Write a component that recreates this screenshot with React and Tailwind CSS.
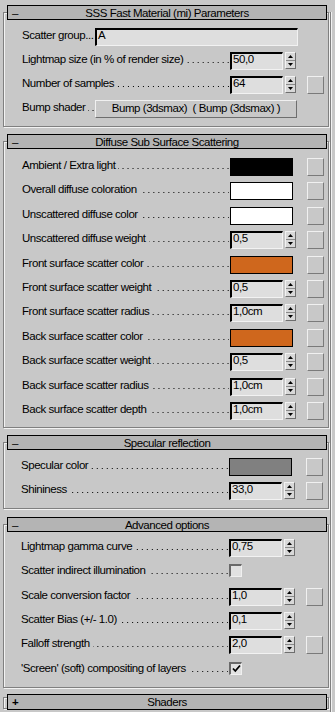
import React from "react";

const FONT = "font-['Liberation_Sans',Arial,sans-serif]";

function Leader() {
  return (
    <div className="flex-1 ml-[3px] mr-[1px] mt-[10px] h-px bg-[linear-gradient(90deg,transparent_4px,#000_4px)] bg-[length:5px_1px] bg-repeat-x bg-right" />
  );
}

function Label({ text, w = "w-[208px]" }) {
  return (
    <div className={`${w} shrink-0 flex h-[18px]`}>
      <span className="whitespace-nowrap leading-[14px]">{text}</span>
      <Leader />
    </div>
  );
}

function Field({ value, w = "w-[53px]" }) {
  return (
    <div className={`${w} h-[18px] bg-[#dedede] border-t-2 border-l-2 border-r border-b border-t-black border-l-black border-r-[#f2f2f2] border-b-[#f2f2f2] pl-px leading-[11px] whitespace-nowrap`}>
      {value}
    </div>
  );
}

function Spinner({ value }) {
  return (
    <div className="flex h-[18px]">
      <Field value={value} />
      <div className="ml-[2px] w-[11px] h-[17px] flex flex-col border border-t-[#f2f2f2] border-l-[#f2f2f2] border-r-[#6e6e6e] border-b-[#6e6e6e] bg-[#d8d8d8]">
        <div className="flex-1 flex items-center justify-center border-b border-b-[#8a8a8a]">
          <svg width="5" height="3" viewBox="0 0 5 3"><polygon points="0,3 5,3 2.5,0" fill="#000" /></svg>
        </div>
        <div className="flex-1 flex items-center justify-center">
          <svg width="5" height="3" viewBox="0 0 5 3"><polygon points="0,0 5,0 2.5,3" fill="#000" /></svg>
        </div>
      </div>
    </div>
  );
}

function Swatch({ color }) {
  return <div className={`w-[63px] h-[18px] border border-black ${color}`} />;
}

function SqBtn() {
  return (
    <div className="w-[17px] h-[18px] border border-t-[#f0f0f0] border-l-[#f0f0f0] border-r-[#7a7a7a] border-b-[#7a7a7a] bg-[#c8c8c8]" />
  );
}

function Check({ checked }) {
  return (
    <div className="mt-px w-[13px] h-[13px] bg-[#e2e2e2] border-t-2 border-l-2 border-r border-b border-t-[#6a6a6a] border-l-[#6a6a6a] border-r-[#f0f0f0] border-b-[#f0f0f0] flex items-center justify-center">
      {checked && (
        <svg width="9" height="9" viewBox="0 0 9 9">
          <path d="M1 4.5 L3.3 7 L8 1.5" stroke="#000" strokeWidth="1.8" fill="none" />
        </svg>
      )}
    </div>
  );
}

function Row({ label, control, btn }) {
  return (
    <div className="flex h-[18px]">
      <Label text={label} />
      <div className="w-[77px] shrink-0 flex">{control}</div>
      {btn && <SqBtn />}
    </div>
  );
}

function Header({ title }) {
  return (
    <div className="flex h-[15px] border border-black bg-[#b4b4b4] leading-[14px]">
      <span className="w-[18px] pl-[4px]">–</span>
      <span className="flex-1 text-center whitespace-nowrap">{title}</span>
      <span className="w-[18px]" />
    </div>
  );
}

function Rollout({ title, mt, pt, pb, pl, gap, children }) {
  return (
    <div className={`ml-[3px] mr-px border border-[#808080] shadow-[inset_1px_1px_0_#f2f2f2,1px_1px_0_#f2f2f2] ${mt}`}>
      <div className="-mt-[8px] ml-[3px] mr-px">
        <Header title={title} />
      </div>
      <div className={`flex flex-col ${pt} ${pb} ${pl} ${gap}`}>{children}</div>
    </div>
  );
}

export default function App() {
  return (
    <div className={`w-[335px] h-[712px] overflow-hidden bg-[#c8c8c8] text-black text-[11.5px] tracking-[-0.45px] ${FONT} flex`}>
      <div className="w-[330px] shrink-0 flex flex-col">
        <Rollout title="SSS Fast Material (mi) Parameters" mt="mt-[12px]" pt="pt-[8px]" pb="pb-[8px]" pl="pl-[18px]" gap="gap-[6px]">
          <div className="flex h-[18px]">
            <span className="w-[73px] shrink-0 overflow-hidden whitespace-nowrap leading-[14px]">Scatter group...</span>
            <Field value="A" w="w-[203px]" />
          </div>
          <Row label="Lightmap size (in % of render size)" control={<Spinner value="50,0" />} />
          <Row label="Number of samples" control={<Spinner value="64" />} btn />
          <div className="flex h-[18px]">
            <Label text="Bump shader" w="w-[73px]" />
            <div className="w-[202px] h-[18px] border border-t-[#f0f0f0] border-l-[#f0f0f0] border-r-[#6e6e6e] border-b-[#6e6e6e] bg-[#c8c8c8] text-center leading-[15px] whitespace-nowrap">
              Bump (3dsmax)&nbsp; ( Bump (3dsmax) )
            </div>
          </div>
        </Rollout>

        <Rollout title="Diffuse Sub Surface Scattering" mt="mt-[14px]" pt="pt-[9px]" pb="pb-[7px]" pl="pl-[18px]" gap="gap-[6.4px]">
          <Row label="Ambient / Extra light" control={<Swatch color="bg-black" />} btn />
          <Row label="Overall diffuse coloration" control={<Swatch color="bg-white" />} btn />
          <Row label="Unscattered diffuse color" control={<Swatch color="bg-white" />} btn />
          <Row label="Unscattered diffuse weight" control={<Spinner value="0,5" />} btn />
          <Row label="Front surface scatter color" control={<Swatch color="bg-[#cf671d]" />} btn />
          <Row label="Front surface scatter weight" control={<Spinner value="0,5" />} btn />
          <Row label="Front surface scatter radius" control={<Spinner value="1,0cm" />} btn />
          <Row label="Back surface scatter color" control={<Swatch color="bg-[#cf671d]" />} btn />
          <Row label="Back surface scatter weight" control={<Spinner value="0,5" />} btn />
          <Row label="Back surface scatter radius" control={<Spinner value="1,0cm" />} btn />
          <Row label="Back surface scatter depth" control={<Spinner value="1,0cm" />} btn />
        </Rollout>

        <Rollout title="Specular reflection" mt="mt-[14px]" pt="pt-[8px]" pb="pb-[8px]" pl="pl-[17px]" gap="gap-[6px]">
          <Row label="Specular color" control={<Swatch color="bg-[#808080]" />} btn />
          <Row label="Shininess" control={<Spinner value="33,0" />} btn />
        </Rollout>

        <Rollout title="Advanced options" mt="mt-[15px]" pt="pt-[7px]" pb="pb-[8px]" pl="pl-[17px]" gap="gap-[6.4px]">
          <Row label="Lightmap gamma curve" control={<Spinner value="0,75" />} />
          <Row label="Scatter indirect illumination" control={<Check />} />
          <Row label="Scale conversion factor" control={<Spinner value="1,0" />} btn />
          <Row label="Scatter Bias (+/- 1.0)" control={<Spinner value="0,1" />} />
          <Row label="Falloff strength" control={<Spinner value="2,0" />} btn />
          <Row label="'Screen' (soft) compositing of layers" control={<Check checked />} />
        </Rollout>

        <div className="ml-[3px] mr-px mt-[9px] h-[12px] border border-[#808080] shadow-[inset_1px_1px_0_#f2f2f2,1px_1px_0_#f2f2f2]">
          <div className="-mt-[4px] ml-[3px] mr-px">
            <div className="flex h-[16px] border border-black bg-[#b4b4b4] leading-[14px]">
              <span className="w-[18px] pl-[4px] font-bold">+</span>
              <span className="flex-1 text-center">Shaders</span>
              <span className="w-[18px]" />
            </div>
          </div>
        </div>
      </div>
      <div className="mt-[12px] w-[2px] shrink-0 border-l border-[#808080] shadow-[inset_1px_0_0_#f2f2f2]" />
      <div className="flex-1" />
    </div>
  );
}
